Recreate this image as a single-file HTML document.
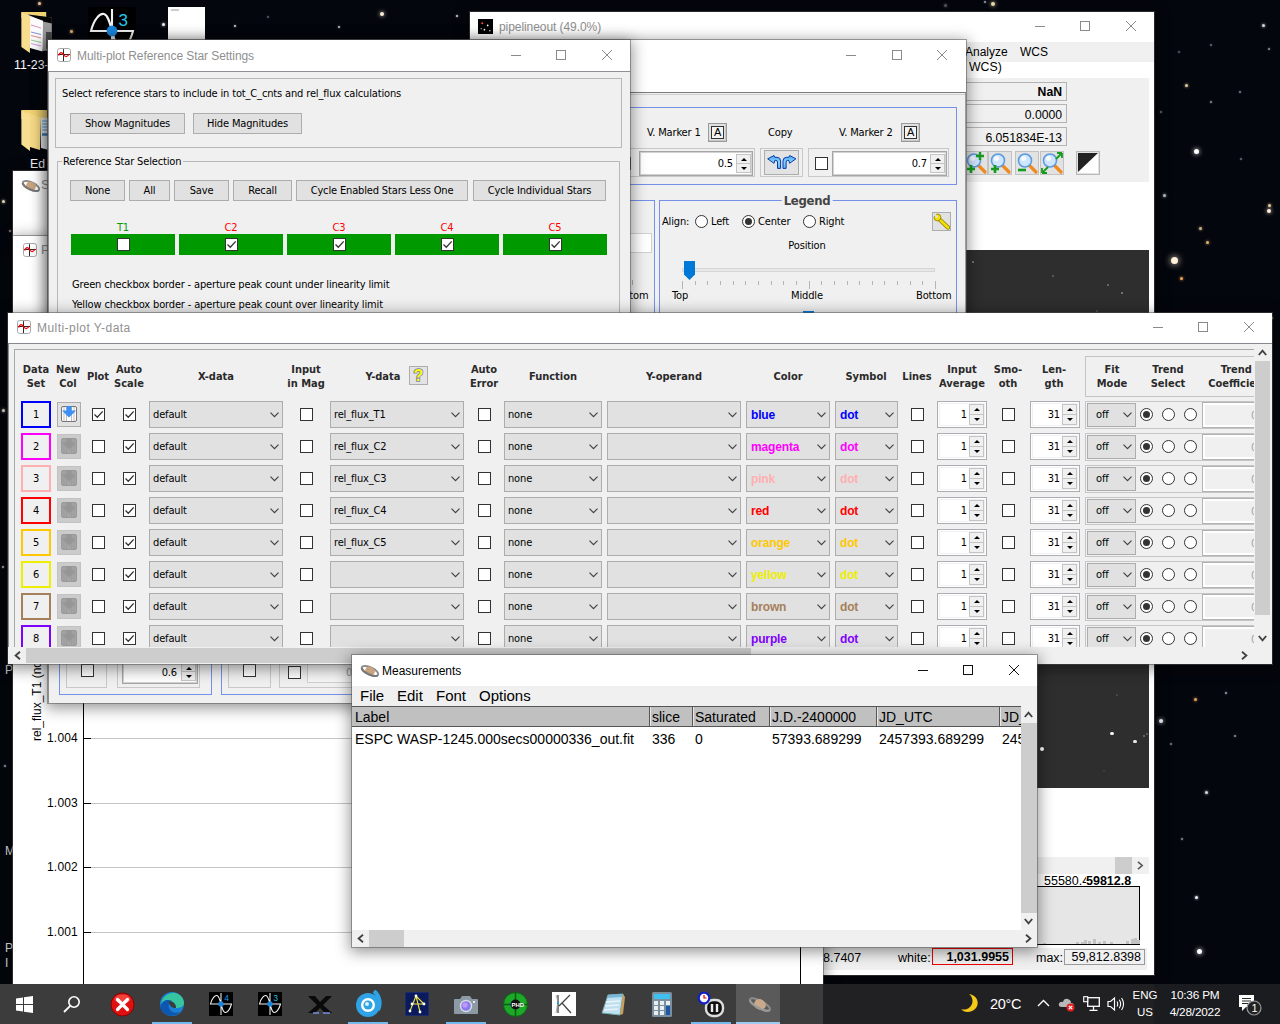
<!DOCTYPE html>
<html><head><meta charset="utf-8"><title>desktop</title>
<style>
*{box-sizing:border-box;margin:0;padding:0}
html,body{width:1280px;height:1024px;overflow:hidden}
body{background:#04060d;position:relative;font-family:"DejaVu Sans Condensed","Liberation Sans",sans-serif;font-size:11px;color:#000;letter-spacing:-.15px}
.a{position:absolute}
.seg{font-family:"Liberation Sans",sans-serif;letter-spacing:0}
.win{position:absolute;background:#f0f0f0;box-shadow:0 0 0 1px rgba(80,80,80,.5),0 3px 14px 2px rgba(0,0,0,.42)}
.lb{position:absolute;left:0;bottom:0;width:1px;background:#8e8e8e}
.tbar{position:absolute;left:0;top:0;right:0;background:#fff}
.ttl{position:absolute;font-family:"Liberation Sans",sans-serif;font-size:12px;color:#8f8f8f;white-space:nowrap;line-height:14px;letter-spacing:-.07px}
.btn{position:absolute;background:#e1e1e1;border:1px solid #adadad;text-align:center;white-space:nowrap;font-size:11px}
.combo{position:absolute;background:#e1e1e1;border:1px solid #adadad;height:27px;line-height:26px;padding-left:3px;white-space:nowrap;font-size:11px}
.combo svg{position:absolute;right:3px;top:10px}
.cb{position:absolute;width:13px;height:13px;background:#fff;border:1px solid #333}
.cb svg{position:absolute;left:0;top:0}
.spin{position:absolute;background:#fff;border:1px solid #abadb3;height:27px;font-size:11px;line-height:26px;text-align:right;box-shadow:inset 0 0 0 1px #fff, inset 0 0 0 2px #f1f1f1}
.spin i{position:absolute;right:2px;width:15px;background:#f0f0f0;border:1px solid #c4c4c4;display:block}
.spin i.u{top:2px;height:11px}
.spin i.d{bottom:2px;height:11px}
.spin i:after{content:"";position:absolute;left:4px;border-left:3px solid transparent;border-right:3px solid transparent}
.spin i.u:after{top:3px;border-bottom:3px solid #000}
.spin i.d:after{top:3px;border-top:3px solid #000}
.spin.m{border-color:#a6a6a6;box-shadow:inset 0 0 0 1px #d2d2d2}
.spin.m i{right:1px;width:15px}
.spin.m i.u,.spin.m i.d{height:10px}
.rad{position:absolute;width:13px;height:13px;border-radius:50%;background:#fff;border:1px solid #333}
.rad.on:after{content:"";position:absolute;left:2px;top:2px;width:7px;height:7px;border-radius:50%;background:#333}
.hd{position:absolute;letter-spacing:0;font-weight:bold;font-size:11px;line-height:14px;text-align:center;color:#2a2a2a;white-space:nowrap;transform:translateX(-50%)}
.blue{border:1px solid #7590ea}
.grp{position:absolute;border:1px solid #c8c8c8}
.star{position:absolute;border-radius:50%}
</style></head>
<body>
<div class="star" style="left:1261.5px;top:23.5px;width:3px;height:3px;background:#cfd3dc;box-shadow:0 0 3px #cfd3dc"></div><div class="star" style="left:1210.0px;top:44.0px;width:2px;height:2px;background:#667;box-shadow:0 0 2px #667"></div><div class="star" style="left:1178.0px;top:51.0px;width:2px;height:2px;background:#556;box-shadow:0 0 2px #556"></div><div class="star" style="left:1184.5px;top:83.5px;width:3px;height:3px;background:#d9c79a;box-shadow:0 0 3px #d9c79a"></div><div class="star" style="left:1268.0px;top:48.0px;width:2px;height:2px;background:#889;box-shadow:0 0 2px #889"></div><div class="star" style="left:1239.0px;top:91.0px;width:2px;height:2px;background:#778;box-shadow:0 0 2px #778"></div><div class="star" style="left:1210.0px;top:101.0px;width:2px;height:2px;background:#889;box-shadow:0 0 2px #889"></div><div class="star" style="left:1160.0px;top:111.0px;width:2px;height:2px;background:#667;box-shadow:0 0 2px #667"></div><div class="star" style="left:1194.0px;top:148.5px;width:5px;height:5px;background:#ffffff;box-shadow:0 0 5px #ffffff"></div><div class="star" style="left:1240.0px;top:158.0px;width:2px;height:2px;background:#667;box-shadow:0 0 2px #667"></div><div class="star" style="left:1162.5px;top:193.5px;width:3px;height:3px;background:#b8bcc8;box-shadow:0 0 3px #b8bcc8"></div><div class="star" style="left:1267.5px;top:203.5px;width:3px;height:3px;background:#e8c89a;box-shadow:0 0 3px #e8c89a"></div><div class="star" style="left:1267.0px;top:209.0px;width:4px;height:4px;background:#fff0dd;box-shadow:0 0 4px #fff0dd"></div><div class="star" style="left:1198.5px;top:227.0px;width:3px;height:3px;background:#c9b08a;box-shadow:0 0 3px #c9b08a"></div><div class="star" style="left:1205.5px;top:240.5px;width:3px;height:3px;background:#d8b070;box-shadow:0 0 3px #d8b070"></div><div class="star" style="left:1171.0px;top:257.0px;width:7px;height:7px;background:#fff2d8;box-shadow:0 0 7px #fff2d8"></div><div class="star" style="left:1179.5px;top:277.0px;width:3px;height:3px;background:#f0a050;box-shadow:0 0 3px #f0a050"></div><div class="star" style="left:1271.0px;top:317.0px;width:2px;height:2px;background:#c9a860;box-shadow:0 0 2px #c9a860"></div><div class="star" style="left:1159.0px;top:719.0px;width:4px;height:4px;background:#f4f6ff;box-shadow:0 0 4px #f4f6ff"></div><div class="star" style="left:1193.5px;top:697.5px;width:3px;height:3px;background:#e0a060;box-shadow:0 0 3px #e0a060"></div><div class="star" style="left:1225.0px;top:692.0px;width:2px;height:2px;background:#99a;box-shadow:0 0 2px #99a"></div><div class="star" style="left:1234.0px;top:735.0px;width:2px;height:2px;background:#889;box-shadow:0 0 2px #889"></div><div class="star" style="left:1204.5px;top:790.5px;width:3px;height:3px;background:#cdd;box-shadow:0 0 3px #cdd"></div><div class="star" style="left:1181.0px;top:838.0px;width:2px;height:2px;background:#889;box-shadow:0 0 2px #889"></div><div class="star" style="left:1194.5px;top:895.5px;width:3px;height:3px;background:#eef;box-shadow:0 0 3px #eef"></div><div class="star" style="left:1196.5px;top:948.5px;width:5px;height:5px;background:#ffffff;box-shadow:0 0 5px #ffffff"></div><div class="star" style="left:1170.0px;top:743.0px;width:2px;height:2px;background:#778;box-shadow:0 0 2px #778"></div><div class="star" style="left:37.5px;top:1.5px;width:3px;height:3px;background:#e8c090;box-shadow:0 0 3px #e8c090"></div><div class="star" style="left:69.5px;top:29.5px;width:3px;height:3px;background:#e0b070;box-shadow:0 0 3px #e0b070"></div><div class="star" style="left:161.5px;top:22.5px;width:3px;height:3px;background:#eee;box-shadow:0 0 3px #eee"></div><div class="star" style="left:234.0px;top:24.5px;width:2px;height:2px;background:#ccc;box-shadow:0 0 2px #ccc"></div><div class="star" style="left:267.0px;top:16.0px;width:2px;height:2px;background:#556;box-shadow:0 0 2px #556"></div><div class="star" style="left:338.0px;top:26.0px;width:2px;height:2px;background:#bbb;box-shadow:0 0 2px #bbb"></div><div class="star" style="left:380.0px;top:12.0px;width:4px;height:4px;background:#f6ecd6;box-shadow:0 0 4px #f6ecd6"></div><div class="star" style="left:456.0px;top:15.0px;width:2px;height:2px;background:#ccc;box-shadow:0 0 2px #ccc"></div><div class="star" style="left:943.5px;top:3.5px;width:3px;height:3px;background:#556;box-shadow:0 0 3px #556"></div><div class="star" style="left:984.0px;top:1.0px;width:2px;height:2px;background:#99a;box-shadow:0 0 2px #99a"></div><div class="star" style="left:991.0px;top:2.0px;width:4px;height:4px;background:#efe3b0;box-shadow:0 0 4px #efe3b0"></div><div class="star" style="left:1.5px;top:199.5px;width:3px;height:3px;background:#e8e0c0;box-shadow:0 0 3px #e8e0c0"></div><div class="star" style="left:1.5px;top:408.5px;width:3px;height:3px;background:#eed;box-shadow:0 0 3px #eed"></div><div class="star" style="left:8.5px;top:229.5px;width:2px;height:2px;background:#a88;box-shadow:0 0 2px #a88"></div><div class="star" style="left:11.0px;top:463.0px;width:2px;height:2px;background:#a77;box-shadow:0 0 2px #a77"></div><div class="star" style="left:2.0px;top:566.0px;width:2px;height:2px;background:#bbb;box-shadow:0 0 2px #bbb"></div><div class="star" style="left:4.0px;top:765.0px;width:2px;height:2px;background:#99a;box-shadow:0 0 2px #99a"></div>
<svg class="a" style="left:18px;top:8px" width="36" height="50" viewBox="0 0 36 50"><path d="M3.4 4H28.2V10H3.4Z" fill="#f3d273"/><path d="M10 6.4L33.8 9.4V42L25 43Z" fill="#9a9a9a"/><path d="M10 6.4L33.8 9.4V15.5L25 13.5Z" fill="#050505"/><path d="M28 24H33.8V40L28 41Z" fill="#4a4a4a"/><path d="M9 7L25 12.7L24.5 43.5L12 40Z" fill="#fbfbfb"/><path d="M13 17L23 20" stroke="#c7a" stroke-width=".8"/><path d="M13 24L23 26.5" stroke="#67c" stroke-width=".8"/><path d="M13 27.5L23 30" stroke="#d66" stroke-width=".8"/><path d="M13 32L23 34.5" stroke="#7b7" stroke-width=".8"/><path d="M13 35.5L23 38" stroke="#c7d" stroke-width=".8"/><path d="M3.4 4.2L12.3 8.6L11.9 45L3.4 39Z" fill="#f9dd8e"/></svg><div class="a seg" style="left:14px;top:57px;color:#fff;font-size:12.3px;line-height:16px;white-space:nowrap">11-23-</div><svg class="a" style="left:88px;top:7px" width="48" height="48" viewBox="0 0 24 24"><rect width="24" height="24" fill="#000"/><path d="M12 1V23M12 12H1.5C3 6 6 3 8 3.5C10 4 11 8 12 12ZM12 12H22.5C21 18 18 21 16 20.5C14 20 13 16 12 12Z" fill="none" stroke="#f2f2f2" stroke-width="1.05"/><circle cx="12" cy="12" r="2.7" fill="#1a86dc"/><text x="15.3" y="9.3" font-family="Liberation Sans,sans-serif" font-size="8.5" fill="#20c8f0">3</text></svg><div class="a" style="left:168px;top:7px;width:37px;height:36px;background:#fff"></div><div class="a" style="left:171px;top:9px;width:8px;height:2px;background:#ccc"></div><svg class="a" style="left:18px;top:108px" width="34" height="46" viewBox="0 0 34 46"><path d="M3.4 2H29V11H3.4Z" fill="#f1d272"/><path d="M23 9.8H30V41.7L23 40Z" fill="#e4e8ec"/><path d="M24 13H30M24 16H30M24 19H30M24 22H30" stroke="#5aa0dc" stroke-width="1.2"/><path d="M24 26.5H30" stroke="#3a78b8" stroke-width="2.4"/><path d="M8 3.5L23 10L22 42L12 39Z" fill="#f6da86"/><path d="M3.4 2.5L12 8L12 43L3.4 36.5Z" fill="#f8de92"/></svg><div class="a seg" style="left:30px;top:156px;color:#fff;font-size:12.3px;line-height:16px;white-space:nowrap">Ed</div><div class="a seg" style="left:5px;top:663px;color:#ddd;font-size:12px;width:8px;overflow:hidden">P</div><div class="a seg" style="left:5px;top:844px;color:#ddd;font-size:12px;width:8px;overflow:hidden">M</div><div class="a seg" style="left:5px;top:941px;color:#ddd;font-size:12px;width:8px;overflow:hidden">P</div><div class="a seg" style="left:5px;top:956px;color:#ddd;font-size:12px;width:8px;overflow:hidden">I</div>
<div class="win" style="left:470px;top:12px;width:684px;height:963px;background:#fff"><div class="tbar" style="height:30px"></div><svg class="a" style="left:8px;top:7px" width="15" height="15" viewBox="0 0 14 14"><rect width="14" height="14" fill="#000"/><circle cx="4" cy="4" r="1" fill="#f44"/><circle cx="9" cy="6" r=".8" fill="#fff"/><circle cx="6" cy="10" r=".8" fill="#fff"/><circle cx="11" cy="11" r=".7" fill="#ddd"/><circle cx="3" cy="9" r=".6" fill="#ccc"/></svg><div class="ttl" style="left:29px;top:8px">pipelineout (49.0%)</div><svg class="a" style="left:565px;top:9px" width="11" height="11"><path d="M0 5.5H10" stroke="#8a8a8a" stroke-width="1"/></svg><svg class="a" style="left:610px;top:9px" width="11" height="11"><rect x="0.5" y="0.5" width="9" height="9" fill="none" stroke="#8a8a8a" stroke-width="1"/></svg><svg class="a" style="left:656px;top:9px" width="11" height="11"><path d="M0 0L10 10M10 0L0 10" stroke="#8a8a8a" stroke-width="1"/></svg><div class="a seg" style="left:0;top:30px;width:684px;height:20px;background:#f0f0f0;font-size:12px;line-height:21px"><span class="a" style="left:495px">Analyze</span><span class="a" style="left:550px">WCS</span></div><div class="a seg" style="left:499px;top:48px;font-size:12.3px;line-height:15px">WCS)</div><div class="a" style="left:0;top:66px;width:679px;height:104px;background:#f0f0f0"></div><div class="a seg" style="left:420px;top:70px;width:177px;height:19px;border:1px solid #b4b4b4;background:#f0f0f0;text-align:right;padding-right:4px;font-size:12.2px;line-height:19px;font-weight:bold">NaN</div><div class="a seg" style="left:420px;top:92px;width:177px;height:19px;border:1px solid #b4b4b4;background:#f0f0f0;text-align:right;padding-right:4px;font-size:12.2px;line-height:21px;">0.0000</div><div class="a seg" style="left:420px;top:115px;width:177px;height:19px;border:1px solid #b4b4b4;background:#f0f0f0;text-align:right;padding-right:4px;font-size:12.2px;line-height:21px;">6.051834E-13</div><div class="a" style="left:494px;top:139px;width:24px;height:24px;background:#e2e2e2;border:1px solid #c2c2c2"></div><svg class="a" style="left:494px;top:139px" width="24" height="24" viewBox="0 0 24 24"><path d="M14 14L21 21" stroke="#f08a1e" stroke-width="3.2" stroke-linecap="round"/><circle cx="10" cy="9.5" r="6.5" fill="#cfe6ff" stroke="#5b9be0" stroke-width="1.6"/><circle cx="8.5" cy="7.5" r="2.5" fill="#fff" opacity=".8"/><path d="M3 18H11M7 14V22" stroke="#169c1c" stroke-width="2.6"/><path d="M12 5H20M16 1V9" stroke="#169c1c" stroke-width="2.4"/></svg><div class="a" style="left:518px;top:139px;width:24px;height:24px;background:#e2e2e2;border:1px solid #c2c2c2"></div><svg class="a" style="left:518px;top:139px" width="24" height="24" viewBox="0 0 24 24"><path d="M14 14L21 21" stroke="#f08a1e" stroke-width="3.2" stroke-linecap="round"/><circle cx="10" cy="9.5" r="6.5" fill="#cfe6ff" stroke="#5b9be0" stroke-width="1.6"/><circle cx="8.5" cy="7.5" r="2.5" fill="#fff" opacity=".8"/><path d="M3 18H11M7 14V22" stroke="#169c1c" stroke-width="2.6"/></svg><div class="a" style="left:545px;top:139px;width:24px;height:24px;background:#e2e2e2;border:1px solid #c2c2c2"></div><svg class="a" style="left:545px;top:139px" width="24" height="24" viewBox="0 0 24 24"><path d="M14 14L21 21" stroke="#f08a1e" stroke-width="3.2" stroke-linecap="round"/><circle cx="10" cy="9.5" r="6.5" fill="#cfe6ff" stroke="#5b9be0" stroke-width="1.6"/><circle cx="8.5" cy="7.5" r="2.5" fill="#fff" opacity=".8"/><path d="M3 19H11" stroke="#169c1c" stroke-width="2.6"/></svg><div class="a" style="left:570px;top:139px;width:24px;height:24px;background:#e2e2e2;border:1px solid #c2c2c2"></div><svg class="a" style="left:570px;top:139px" width="24" height="24" viewBox="0 0 24 24"><path d="M14 14L21 21" stroke="#f08a1e" stroke-width="3.2" stroke-linecap="round"/><circle cx="10" cy="9.5" r="6.5" fill="#cfe6ff" stroke="#5b9be0" stroke-width="1.6"/><circle cx="8.5" cy="7.5" r="2.5" fill="#fff" opacity=".8"/><path d="M2 22L8 16M2 22V17M2 22H7M22 2L16 8M22 2V7M22 2H17" stroke="#169c1c" stroke-width="1.8" fill="none"/></svg><div class="a" style="left:606px;top:139px;width:24px;height:24px;background:#e2e2e2;border:1px solid #b8b8b8"></div><svg class="a" style="left:608px;top:141px" width="20" height="20"><rect width="20" height="20" fill="#fff"/><path d="M0 0H20L0 19Z" fill="#222"/></svg><div class="a" style="left:0;top:238px;width:679px;height:538px;background:#2e2e2e"></div><div class="star" style="left:502.0px;top:249.0px;width:2px;height:2px;background:#888"></div><div class="star" style="left:582.0px;top:263.0px;width:2px;height:2px;background:#666"></div><div class="star" style="left:637.0px;top:272.0px;width:2px;height:2px;background:#777"></div><div class="star" style="left:651.0px;top:280.0px;width:2px;height:2px;background:#888"></div><div class="star" style="left:626.0px;top:298.0px;width:2px;height:2px;background:#555"></div><div class="star" style="left:640.3px;top:719.5999999999999px;width:3.4px;height:3.4px;background:#f4f4f4"></div><div class="star" style="left:663.4px;top:727.8px;width:3.2px;height:3.2px;background:#e8e8e8"></div><div class="star" style="left:569.9px;top:734.9px;width:4.2px;height:4.2px;background:#fff"></div><div class="star" style="left:673.0px;top:723.0px;width:2px;height:2px;background:#777"></div><div class="star" style="left:676.0px;top:721.0px;width:2px;height:2px;background:#666"></div><div class="star" style="left:646.0px;top:681.6px;width:2px;height:2px;background:#505050"></div><div class="star" style="left:633.0px;top:758.0px;width:2px;height:2px;background:#444"></div><div class="a" style="left:0;top:845px;width:679px;height:17px;background:#f0f0f0"></div><div class="a" style="left:645px;top:845px;width:17px;height:17px;background:#cdcdcd"></div><svg class="a" style="left:667px;top:849px" width="7" height="9"><path d="M1 0.8L5.2 4.5L1 8.2" fill="none" stroke="#555" stroke-width="1.6"/></svg><div class="a seg" style="left:574px;top:862px;font-size:12.5px;line-height:14px;white-space:nowrap">55580.4</div><div class="a seg" style="left:616px;top:862px;font-size:12.5px;line-height:14px;font-weight:bold;white-space:nowrap;background:#fff">59812.8</div><div class="a" style="left:560px;top:874px;width:110px;height:59px;background:#e6e6e6;border:1px solid #000;border-left:none"></div><div class="a" style="left:573px;top:931px;width:3px;height:1px;background:#c2c2c2"></div><div class="a" style="left:606px;top:930px;width:3px;height:2px;background:#c2c2c2"></div><div class="a" style="left:611px;top:930px;width:3px;height:2px;background:#c2c2c2"></div><div class="a" style="left:614px;top:928px;width:3px;height:4px;background:#c2c2c2"></div><div class="a" style="left:618px;top:929px;width:3px;height:3px;background:#c2c2c2"></div><div class="a" style="left:623px;top:927px;width:3px;height:5px;background:#c2c2c2"></div><div class="a" style="left:628px;top:930px;width:3px;height:2px;background:#c2c2c2"></div><div class="a" style="left:633px;top:929px;width:3px;height:3px;background:#c2c2c2"></div><div class="a" style="left:640px;top:930px;width:3px;height:2px;background:#c2c2c2"></div><div class="a" style="left:656px;top:929px;width:3px;height:3px;background:#c2c2c2"></div><div class="a" style="left:661px;top:927px;width:3px;height:5px;background:#c2c2c2"></div><div class="a" style="left:664px;top:926px;width:3px;height:6px;background:#c2c2c2"></div><div class="a" style="left:667px;top:928px;width:3px;height:4px;background:#c2c2c2"></div><div class="a" style="left:0;top:936px;width:677px;height:22px;background:#f0f0f0"></div><div class="a seg" style="left:353px;top:938px;font-size:12.5px;line-height:16px;white-space:nowrap">8.7407</div><div class="a seg" style="left:428px;top:938px;font-size:12.5px;line-height:16px;white-space:nowrap">white:</div><div class="a seg" style="left:462px;top:936px;width:81px;height:17px;border:1px solid #e00;background:#f0f0f0;text-align:right;padding-right:3px;font-size:12.5px;line-height:16px;font-weight:bold">1,031.9955</div><div class="a seg" style="left:566px;top:938px;font-size:12.5px;line-height:16px;white-space:nowrap">max:</div><div class="a seg" style="left:594px;top:937px;width:81px;height:16px;border:1px solid #999;background:#f0f0f0;text-align:right;padding-right:3px;font-size:12.5px;line-height:14px">59,812.8398</div></div>
<div class="win" style="left:13px;top:171px;width:500px;height:65px;background:#fff"><div class="a" style="left:8px;top:7px"><svg width="20" height="16" viewBox="0 0 20 16"><g transform="rotate(25 10 8)"><ellipse cx="10" cy="8" rx="9" ry="3.6" fill="none" stroke="#8c8c8c" stroke-width="2"/><ellipse cx="10" cy="8" rx="5" ry="4.2" fill="#c9a37c"/><path d="M1.2 8.6A9 3.6 0 0 0 18.8 8.6" fill="none" stroke="#777" stroke-width="2"/></g></svg></div><div class="ttl" style="left:28px;top:7px;font-size:13px">S</div></div>
<div class="win" style="left:13px;top:236px;width:810px;height:760px;background:#fff"><div class="a" style="left:10px;top:7px"><svg width="14" height="14" viewBox="0 0 14 14"><rect x=".5" y=".5" width="13" height="13" rx="2.2" fill="#fff" stroke="#a8a8a8"/><path d="M6.5 1.2V13M1 6.5H13" stroke="#2a2a2a" stroke-width="1"/><path d="M1.6 7.6C3 4.2 4.6 3.6 6.5 6.5S10 9.6 12.2 6" fill="none" stroke="#f00" stroke-width="1.3"/></svg></div><div class="ttl" style="left:28px;top:7px;font-size:13px">P</div><div class="a" style="left:70px;top:440px;width:1px;height:330px;background:#000"></div><div class="a" style="left:787px;top:700px;width:1px;height:70px;background:#000"></div><div class="a" style="left:78px;top:502px;width:709px;height:1px;background:#c4c4c4"></div><div class="a" style="left:70px;top:502px;width:8px;height:1px;background:#000"></div><div class="a seg" style="left:20px;top:494px;width:45px;text-align:right;font-size:12px;line-height:16px;letter-spacing:.2px">1.004</div><div class="a" style="left:78px;top:567px;width:709px;height:1px;background:#c4c4c4"></div><div class="a" style="left:70px;top:567px;width:8px;height:1px;background:#000"></div><div class="a seg" style="left:20px;top:559px;width:45px;text-align:right;font-size:12px;line-height:16px;letter-spacing:.2px">1.003</div><div class="a" style="left:78px;top:631px;width:709px;height:1px;background:#c4c4c4"></div><div class="a" style="left:70px;top:631px;width:8px;height:1px;background:#000"></div><div class="a seg" style="left:20px;top:623px;width:45px;text-align:right;font-size:12px;line-height:16px;letter-spacing:.2px">1.002</div><div class="a" style="left:78px;top:696px;width:709px;height:1px;background:#c4c4c4"></div><div class="a" style="left:70px;top:696px;width:8px;height:1px;background:#000"></div><div class="a seg" style="left:20px;top:688px;width:45px;text-align:right;font-size:12px;line-height:16px;letter-spacing:.2px">1.001</div><div class="a seg" style="left:17px;top:505px;width:0;height:0"><div style="position:absolute;left:0;top:0;transform-origin:0 0;transform:rotate(-90deg);white-space:nowrap;font-size:12px;line-height:14px;width:200px">rel_flux_T1 (normalized)</div></div></div>
<div class="win" style="left:48px;top:40px;width:918px;height:663px"><div class="tbar" style="height:53px;border-bottom:1px solid #7a7a7a"></div><div class="a" style="left:0;top:54px;width:918px;height:1px;background:#d0d0d0"></div><svg class="a" style="left:798px;top:10px" width="11" height="11"><path d="M0 5.5H10" stroke="#8a8a8a" stroke-width="1"/></svg><svg class="a" style="left:844px;top:10px" width="11" height="11"><rect x="0.5" y="0.5" width="9" height="9" fill="none" stroke="#8a8a8a" stroke-width="1"/></svg><svg class="a" style="left:889px;top:10px" width="11" height="11"><path d="M0 0L10 10M10 0L0 10" stroke="#8a8a8a" stroke-width="1"/></svg><div class="a" style="right:0;top:53px;width:1px;bottom:0;background:#9c9c9c"></div><div class="lb" style="top:53px"></div><div class="a blue" style="left:500px;top:67px;width:409px;height:78px"></div><div class="a" style="left:599px;top:86px;white-space:nowrap;line-height:14px">V. Marker 1</div><div class="a" style="left:720px;top:86px;white-space:nowrap;line-height:14px">Copy</div><div class="a" style="left:791px;top:86px;white-space:nowrap;line-height:14px">V. Marker 2</div><div class="a" style="left:660px;top:83px;width:19px;height:19px;background:#e1e1e1;border:1px solid #9a9a9a;box-shadow:inset -1px -1px 0 #c8c8c8"><div style="position:absolute;left:2px;top:2px;width:13px;height:13px;border:1px solid #333;font:normal 11px/11px 'Liberation Sans',sans-serif;text-align:center;background:#f4f4f4">A</div></div><div class="a" style="left:853px;top:83px;width:19px;height:19px;background:#e1e1e1;border:1px solid #9a9a9a;box-shadow:inset -1px -1px 0 #c8c8c8"><div style="position:absolute;left:2px;top:2px;width:13px;height:13px;border:1px solid #333;font:normal 11px/11px 'Liberation Sans',sans-serif;text-align:center;background:#f4f4f4">A</div></div><div class="grp" style="left:560px;top:108px;width:147px;height:29px"></div><div class="cb" style="left:570px;top:117px"></div><div class="spin m" style="left:591px;top:111px;width:114px;height:25px;padding-right:19px;line-height:23px">0.5<i class="u"></i><i class="d"></i></div><div class="grp" style="left:712px;top:108px;width:43px;height:29px"></div><div class="a" style="left:716px;top:110px;width:35px;height:25px;background:#e3e3e3;border:1px solid #adadad"></div><svg class="a" style="left:719px;top:115px" width="30" height="15" viewBox="0 0 30 15"><defs><linearGradient id="cg" x1="0" y1="0" x2="0" y2="1"><stop offset="0" stop-color="#4aa4f4"/><stop offset=".5" stop-color="#86d2ff"/><stop offset="1" stop-color="#5ab4f8"/></linearGradient></defs><g fill="url(#cg)" stroke="#0b3ca6" stroke-width="1" stroke-linejoin="round"><path d="M0.7 3.8L7 0.5L7.8 2.3H10Q13.6 2.3 13.6 6V13.4H10.5V7Q10.5 5.4 8.9 5.4H7.8L7 8.3Z"/><path transform="translate(29.6 0) scale(-1 1)" d="M0.7 3.8L7 0.5L7.8 2.3H10Q13.6 2.3 13.6 6V13.4H10.5V7Q10.5 5.4 8.9 5.4H7.8L7 8.3Z"/></g></svg><div class="grp" style="left:760px;top:108px;width:141px;height:29px"></div><div class="cb" style="left:767px;top:117px"></div><div class="spin m" style="left:784px;top:111px;width:115px;height:25px;padding-right:19px;line-height:23px">0.7<i class="u"></i><i class="d"></i></div><div class="a blue" style="left:500px;top:160px;width:107px;height:200px"></div><div class="a" style="left:570px;top:193px;width:34px;height:20px;background:#fff;border:1px solid #d0d0d0"></div><div class="a" style="left:565px;top:249px;white-space:nowrap;line-height:14px">Bottom</div><div class="a" style="left:584px;top:240px;width:1px;height:5px;background:#b0b0b0"></div><div class="a blue" style="left:611px;top:160px;width:298px;height:200px"></div><div class="a" style="left:759px;top:153px;transform:translateX(-50%);background:#f0f0f0;padding:0 2px;font-weight:bold;font-size:13px;line-height:16px;color:#444;letter-spacing:-.3px">Legend</div><div class="a" style="left:614px;top:175px;white-space:nowrap;line-height:14px">Align:</div><div class="rad" style="left:646.5px;top:174.5px"></div><div class="a" style="left:663px;top:175px;line-height:14px">Left</div><div class="rad on" style="left:693.5px;top:174.5px"></div><div class="a" style="left:710px;top:175px;line-height:14px">Center</div><div class="rad" style="left:754.5px;top:174.5px"></div><div class="a" style="left:771px;top:175px;line-height:14px">Right</div><div class="a" style="left:884px;top:172px;width:19px;height:19px;background:#e1e1e1;border:1px solid #adadad"></div><svg class="a" style="left:885px;top:173px" width="17" height="17" viewBox="0 0 17 17"><path d="M6 6L15 14.5" stroke="#8a7a00" stroke-width="4.2" stroke-linecap="round"/><path d="M6 6L15 14.5" stroke="#f4e000" stroke-width="2.8" stroke-linecap="round"/><circle cx="4.5" cy="4.5" r="3.4" fill="#f4e000" stroke="#8a7a00" stroke-width=".8"/><path d="M1 1L4.5 4.5" stroke="#e1e1e1" stroke-width="2.2"/></svg><div class="a" style="left:759px;top:199px;transform:translateX(-50%);line-height:14px">Position</div><div class="a" style="left:634px;top:228px;width:253px;height:4px;background:#e7e7e7;border:1px solid #d6d6d6"></div><svg class="a" style="left:636px;top:221px" width="11" height="19"><path d="M0 0H11V13.5L5.5 19L0 13.5Z" fill="#0078d7"/></svg><div class="a" style="left:634.0px;top:241px;width:1px;height:8px;background:#b4b4b4"></div><div class="a" style="left:646.6px;top:241px;width:1px;height:4px;background:#b4b4b4"></div><div class="a" style="left:659.3px;top:241px;width:1px;height:4px;background:#b4b4b4"></div><div class="a" style="left:672.0px;top:241px;width:1px;height:4px;background:#b4b4b4"></div><div class="a" style="left:684.6px;top:241px;width:1px;height:4px;background:#b4b4b4"></div><div class="a" style="left:697.2px;top:241px;width:1px;height:4px;background:#b4b4b4"></div><div class="a" style="left:709.9px;top:241px;width:1px;height:4px;background:#b4b4b4"></div><div class="a" style="left:722.5px;top:241px;width:1px;height:4px;background:#b4b4b4"></div><div class="a" style="left:735.2px;top:241px;width:1px;height:4px;background:#b4b4b4"></div><div class="a" style="left:747.9px;top:241px;width:1px;height:4px;background:#b4b4b4"></div><div class="a" style="left:760.5px;top:241px;width:1px;height:8px;background:#b4b4b4"></div><div class="a" style="left:773.1px;top:241px;width:1px;height:4px;background:#b4b4b4"></div><div class="a" style="left:785.8px;top:241px;width:1px;height:4px;background:#b4b4b4"></div><div class="a" style="left:798.5px;top:241px;width:1px;height:4px;background:#b4b4b4"></div><div class="a" style="left:811.1px;top:241px;width:1px;height:4px;background:#b4b4b4"></div><div class="a" style="left:823.8px;top:241px;width:1px;height:4px;background:#b4b4b4"></div><div class="a" style="left:836.4px;top:241px;width:1px;height:4px;background:#b4b4b4"></div><div class="a" style="left:849.0px;top:241px;width:1px;height:4px;background:#b4b4b4"></div><div class="a" style="left:861.7px;top:241px;width:1px;height:4px;background:#b4b4b4"></div><div class="a" style="left:874.4px;top:241px;width:1px;height:4px;background:#b4b4b4"></div><div class="a" style="left:887.0px;top:241px;width:1px;height:8px;background:#b4b4b4"></div><div class="a" style="left:624px;top:249px;line-height:14px">Top</div><div class="a" style="left:759px;top:249px;transform:translateX(-50%);line-height:14px">Middle</div><div class="a" style="left:868px;top:249px;line-height:14px">Bottom</div><div class="a" style="left:755px;top:271px;width:11px;height:2px;background:#0078d7"></div><div class="a blue" style="left:11px;top:560px;width:153px;height:95px"></div><div class="grp" style="left:18px;top:600px;width:41px;height:48px"></div><div class="cb" style="left:33px;top:624px"></div><div class="grp" style="left:69px;top:600px;width:83px;height:48px"></div><div class="spin m" style="left:74px;top:620px;width:76px;height:24px;padding-right:20px;line-height:23px">0.6<i class="u"></i><i class="d"></i></div><div class="a blue" style="left:173px;top:560px;width:250px;height:95px"></div><div class="grp" style="left:180px;top:600px;width:43px;height:48px"></div><div class="cb" style="left:195px;top:624px"></div><div class="grp" style="left:231px;top:600px;width:120px;height:48px"></div><div class="cb" style="left:240px;top:626px"></div><div class="a" style="left:259px;top:621px;width:88px;height:22px;background:#f6f6f6;border:1px solid #d0d0d0;color:#999;padding-left:38px;line-height:22px">0.6</div></div>
<div class="win" style="left:48px;top:40px;width:582px;height:290px"><div class="tbar" style="height:32px;border-bottom:1px solid #8e9096"></div><div class="a" style="left:9px;top:8px"><svg width="14" height="14" viewBox="0 0 14 14"><rect x=".5" y=".5" width="13" height="13" rx="2.2" fill="#fff" stroke="#a8a8a8"/><path d="M6.5 1.2V13M1 6.5H13" stroke="#2a2a2a" stroke-width="1"/><path d="M1.6 7.6C3 4.2 4.6 3.6 6.5 6.5S10 9.6 12.2 6" fill="none" stroke="#f00" stroke-width="1.3"/></svg></div><div class="lb" style="top:31px"></div><div class="ttl" style="left:29px;top:9px">Multi-plot Reference Star Settings</div><svg class="a" style="left:463px;top:10px" width="11" height="11"><path d="M0 5.5H10" stroke="#8a8a8a" stroke-width="1"/></svg><svg class="a" style="left:508px;top:10px" width="11" height="11"><rect x="0.5" y="0.5" width="9" height="9" fill="none" stroke="#8a8a8a" stroke-width="1"/></svg><svg class="a" style="left:554px;top:10px" width="11" height="11"><path d="M0 0L10 10M10 0L0 10" stroke="#8a8a8a" stroke-width="1"/></svg><div class="grp" style="left:7px;top:38px;width:567px;height:70px;border-color:#b8b8b8"></div><div class="a" style="left:14px;top:47px;white-space:nowrap;line-height:14px;">Select reference stars to include in tot_C_cnts and rel_flux calculations</div><div class="btn" style="left:22px;top:73px;width:115px;height:21px;line-height:20px">Show Magnitudes</div><div class="btn" style="left:145px;top:73px;width:109px;height:21px;line-height:20px">Hide Magnitudes</div><div class="grp" style="left:9px;top:121px;width:563px;height:200px;border-color:#b8b8b8"></div><div class="a" style="left:14px;top:115px;background:#f0f0f0;padding:0 2px 0 1px;white-space:nowrap;line-height:14px">Reference Star Selection</div><div class="btn" style="left:22px;top:140px;width:55px;height:21px;line-height:20px">None</div><div class="btn" style="left:81px;top:140px;width:41px;height:21px;line-height:20px">All</div><div class="btn" style="left:126px;top:140px;width:55px;height:21px;line-height:20px">Save</div><div class="btn" style="left:185px;top:140px;width:59px;height:21px;line-height:20px">Recall</div><div class="btn" style="left:248px;top:140px;width:172px;height:21px;line-height:20px">Cycle Enabled Stars Less One</div><div class="btn" style="left:425px;top:140px;width:133px;height:21px;line-height:20px">Cycle Individual Stars</div><div class="a" style="left:23px;top:181px;width:104px;text-align:center;color:#0a9a0a;line-height:14px">T1</div><div class="a" style="left:23px;top:194px;width:104px;height:21px;background:#009900"></div><div class="cb" style="left:69px;top:198px"></div><div class="a" style="left:131px;top:181px;width:104px;text-align:center;color:#f00;line-height:14px">C2</div><div class="a" style="left:131px;top:194px;width:104px;height:21px;background:#009900"></div><div class="cb" style="left:177px;top:198px"><svg width="11" height="11" viewBox="0 0 11 11"><path d="M1.5 5.5 L4.3 8.3 L9.7 2.4" fill="none" stroke="#333" stroke-width="1.3"/></svg></div><div class="a" style="left:239px;top:181px;width:104px;text-align:center;color:#f00;line-height:14px">C3</div><div class="a" style="left:239px;top:194px;width:104px;height:21px;background:#009900"></div><div class="cb" style="left:285px;top:198px"><svg width="11" height="11" viewBox="0 0 11 11"><path d="M1.5 5.5 L4.3 8.3 L9.7 2.4" fill="none" stroke="#333" stroke-width="1.3"/></svg></div><div class="a" style="left:347px;top:181px;width:104px;text-align:center;color:#f00;line-height:14px">C4</div><div class="a" style="left:347px;top:194px;width:104px;height:21px;background:#009900"></div><div class="cb" style="left:393px;top:198px"><svg width="11" height="11" viewBox="0 0 11 11"><path d="M1.5 5.5 L4.3 8.3 L9.7 2.4" fill="none" stroke="#333" stroke-width="1.3"/></svg></div><div class="a" style="left:455px;top:181px;width:104px;text-align:center;color:#f00;line-height:14px">C5</div><div class="a" style="left:455px;top:194px;width:104px;height:21px;background:#009900"></div><div class="cb" style="left:501px;top:198px"><svg width="11" height="11" viewBox="0 0 11 11"><path d="M1.5 5.5 L4.3 8.3 L9.7 2.4" fill="none" stroke="#333" stroke-width="1.3"/></svg></div><div class="a" style="left:24px;top:238px;white-space:nowrap;line-height:14px;">Green checkbox border - aperture peak count under linearity limit</div><div class="a" style="left:24px;top:258px;white-space:nowrap;line-height:14px;">Yellow checkbox border - aperture peak count over linearity limit</div></div>
<div class="win" style="left:8px;top:313px;width:1264px;height:351px"><div class="tbar" style="height:31px;border-bottom:1px solid #84888e"></div><div class="a" style="left:9px;top:7px"><svg width="14" height="14" viewBox="0 0 14 14"><rect x=".5" y=".5" width="13" height="13" rx="2.2" fill="#fff" stroke="#a8a8a8"/><path d="M6.5 1.2V13M1 6.5H13" stroke="#2a2a2a" stroke-width="1"/><path d="M1.6 7.6C3 4.2 4.6 3.6 6.5 6.5S10 9.6 12.2 6" fill="none" stroke="#f00" stroke-width="1.3"/></svg></div><div class="lb" style="top:30px"></div><div class="ttl" style="left:29px;top:8px;letter-spacing:.45px">Multi-plot Y-data</div><svg class="a" style="left:1145px;top:9px" width="11" height="11"><path d="M0 5.5H10" stroke="#8a8a8a" stroke-width="1"/></svg><svg class="a" style="left:1190px;top:9px" width="11" height="11"><rect x="0.5" y="0.5" width="9" height="9" fill="none" stroke="#8a8a8a" stroke-width="1"/></svg><svg class="a" style="left:1236px;top:9px" width="11" height="11"><path d="M0 0L10 10M10 0L0 10" stroke="#8a8a8a" stroke-width="1"/></svg><div class="a" style="left:1px;top:31px;width:1245px;height:303px;overflow:hidden"><div class="grp" style="left:5px;top:5px;width:1400px;height:400px;border-color:#a8a8a8"></div><div class="grp" style="left:1076px;top:12px;width:400px;height:41px;border-color:#c4c4c4"></div><div class="hd" style="left:27px;top:19px">Data<br>Set</div><div class="hd" style="left:59px;top:19px">New<br>Col</div><div class="hd" style="left:89px;top:26px">Plot</div><div class="hd" style="left:120px;top:19px">Auto<br>Scale</div><div class="hd" style="left:207px;top:26px">X-data</div><div class="hd" style="left:297px;top:19px">Input<br>in Mag</div><div class="hd" style="left:374px;top:26px">Y-data</div><div class="hd" style="left:475px;top:19px">Auto<br>Error</div><div class="hd" style="left:544px;top:26px">Function</div><div class="hd" style="left:665px;top:26px">Y-operand</div><div class="hd" style="left:779px;top:26px">Color</div><div class="hd" style="left:857px;top:26px">Symbol</div><div class="hd" style="left:908px;top:26px">Lines</div><div class="hd" style="left:953px;top:19px">Input<br>Average</div><div class="hd" style="left:999px;top:19px">Smo-<br>oth</div><div class="hd" style="left:1045px;top:19px">Len-<br>gth</div><div class="hd" style="left:1103px;top:19px">Fit<br>Mode</div><div class="hd" style="left:1159px;top:19px">Trend<br>Select</div><div class="hd" style="left:1229px;top:19px">Trend&nbsp;<br>Coefficient</div><div class="a" style="left:400px;top:22px;width:19px;height:19px;background:#e3e3e3;border:1px solid #adadad"><svg class="a" style="left:0;top:0" width="17" height="17" viewBox="0 0 17 17"><text x="8.4" y="14" text-anchor="middle" font-family="Liberation Sans,sans-serif" font-weight="bold" font-size="16" fill="#ffff00" stroke="#7a7eae" stroke-width="1.6" paint-order="stroke">?</text></svg></div><div class="a" style="left:12px;top:57px;width:30px;height:27px;border:2px solid #0000ff;text-align:center;line-height:23px;font-size:11px">1</div><div class="a" style="left:48px;top:58px;width:24px;height:25px;background:#e1e1e1;border:1px solid #adadad"><div style="position:absolute;left:3px;top:3px"><svg width="16" height="16" viewBox="0 0 16 16"><rect x=".5" y=".5" width="15" height="15" rx="1.5" fill="#fff" stroke="#777"/><path d="M3 1V15M5.5 1V15M10.5 1V15M13 1V15" stroke="#bbb" stroke-width="1"/><path d="M5.5 0H10.5V4.5H15L8 11.5L1 4.5H5.5Z" fill="#3b8ff5"/></svg></div></div><div class="cb" style="left:83px;top:64px"><svg width="11" height="11" viewBox="0 0 11 11"><path d="M1.5 5.5 L4.3 8.3 L9.7 2.4" fill="none" stroke="#333" stroke-width="1.3"/></svg></div><div class="cb" style="left:114px;top:64px"><svg width="11" height="11" viewBox="0 0 11 11"><path d="M1.5 5.5 L4.3 8.3 L9.7 2.4" fill="none" stroke="#333" stroke-width="1.3"/></svg></div><div class="combo" style="left:140px;top:57px;width:134px;height:27px;">default<svg width="9" height="6" viewBox="0 0 9 6"><path d="M0.5 0.7 L4.5 4.7 L8.5 0.7" fill="none" stroke="#444" stroke-width="1.2"/></svg></div><div class="cb" style="left:291px;top:64px"></div><div class="combo" style="left:321px;top:57px;width:134px;height:27px;">rel_flux_T1<svg width="9" height="6" viewBox="0 0 9 6"><path d="M0.5 0.7 L4.5 4.7 L8.5 0.7" fill="none" stroke="#444" stroke-width="1.2"/></svg></div><div class="cb" style="left:469px;top:64px"></div><div class="combo" style="left:495px;top:57px;width:98px;height:27px;">none<svg width="9" height="6" viewBox="0 0 9 6"><path d="M0.5 0.7 L4.5 4.7 L8.5 0.7" fill="none" stroke="#444" stroke-width="1.2"/></svg></div><div class="combo" style="left:598px;top:57px;width:134px;height:27px;"><svg width="9" height="6" viewBox="0 0 9 6"><path d="M0.5 0.7 L4.5 4.7 L8.5 0.7" fill="none" stroke="#444" stroke-width="1.2"/></svg></div><div class="combo" style="left:737px;top:57px;width:84px;height:27px;color:#0000ff;font-weight:bold;font-family:'Liberation Sans',sans-serif;font-size:12px;padding-left:4px">blue<svg width="9" height="6" viewBox="0 0 9 6"><path d="M0.5 0.7 L4.5 4.7 L8.5 0.7" fill="none" stroke="#444" stroke-width="1.2"/></svg></div><div class="combo" style="left:826px;top:57px;width:63px;height:27px;color:#0000ff;font-weight:bold;font-family:'Liberation Sans',sans-serif;font-size:12px;padding-left:4px">dot<svg width="9" height="6" viewBox="0 0 9 6"><path d="M0.5 0.7 L4.5 4.7 L8.5 0.7" fill="none" stroke="#444" stroke-width="1.2"/></svg></div><div class="cb" style="left:902px;top:64px"></div><div class="spin" style="left:928px;top:57px;width:50px;height:27px;padding-right:19px;">1<i class="u"></i><i class="d"></i></div><div class="cb" style="left:993px;top:64px"></div><div class="spin" style="left:1021px;top:57px;width:50px;height:27px;padding-right:19px;">31<i class="u"></i><i class="d"></i></div><div class="grp" style="left:1076px;top:57px;width:300px;height:28px;border-color:#c6c6c6"></div><div class="combo" style="left:1078px;top:59px;width:49px;height:24px;padding-left:8px;line-height:22px">off<svg style="top:8px" width="9" height="6" viewBox="0 0 9 6"><path d="M0.5 0.7 L4.5 4.7 L8.5 0.7" fill="none" stroke="#444" stroke-width="1.2"/></svg></div><div class="rad on" style="left:1130.5px;top:64.0px"></div><div class="rad" style="left:1152.5px;top:64.0px"></div><div class="rad" style="left:1174.5px;top:64.0px"></div><div class="a" style="left:1193px;top:58px;width:120px;height:26px;background:#f0f0f0;border:1px solid #b2b2b6;box-shadow:inset 0 0 0 2px #fff;color:#a0a0a0;line-height:25px;padding-left:48px">0</div><div class="a" style="left:12px;top:89px;width:30px;height:27px;border:2px solid #ff00ff;text-align:center;line-height:23px;font-size:11px">2</div><div class="a" style="left:48px;top:90px;width:24px;height:25px;background:#cbcbcb;border:1px solid #c2c2c2"><div style="position:absolute;left:3px;top:3px"><svg width="16" height="16" viewBox="0 0 16 16"><rect x=".5" y=".5" width="15" height="15" rx="1.5" fill="#a4a4a4" stroke="#9a9a9a"/><path d="M3 1V15M5.5 1V15M10.5 1V15M13 1V15" stroke="#9c9c9c" stroke-width="1"/><path d="M5.5 0H10.5V4.5H15L8 11.5L1 4.5H5.5Z" fill="#969696"/></svg></div></div><div class="cb" style="left:83px;top:96px"></div><div class="cb" style="left:114px;top:96px"><svg width="11" height="11" viewBox="0 0 11 11"><path d="M1.5 5.5 L4.3 8.3 L9.7 2.4" fill="none" stroke="#333" stroke-width="1.3"/></svg></div><div class="combo" style="left:140px;top:89px;width:134px;height:27px;">default<svg width="9" height="6" viewBox="0 0 9 6"><path d="M0.5 0.7 L4.5 4.7 L8.5 0.7" fill="none" stroke="#444" stroke-width="1.2"/></svg></div><div class="cb" style="left:291px;top:96px"></div><div class="combo" style="left:321px;top:89px;width:134px;height:27px;">rel_flux_C2<svg width="9" height="6" viewBox="0 0 9 6"><path d="M0.5 0.7 L4.5 4.7 L8.5 0.7" fill="none" stroke="#444" stroke-width="1.2"/></svg></div><div class="cb" style="left:469px;top:96px"></div><div class="combo" style="left:495px;top:89px;width:98px;height:27px;">none<svg width="9" height="6" viewBox="0 0 9 6"><path d="M0.5 0.7 L4.5 4.7 L8.5 0.7" fill="none" stroke="#444" stroke-width="1.2"/></svg></div><div class="combo" style="left:598px;top:89px;width:134px;height:27px;"><svg width="9" height="6" viewBox="0 0 9 6"><path d="M0.5 0.7 L4.5 4.7 L8.5 0.7" fill="none" stroke="#444" stroke-width="1.2"/></svg></div><div class="combo" style="left:737px;top:89px;width:84px;height:27px;color:#ff00ff;font-weight:bold;font-family:'Liberation Sans',sans-serif;font-size:12px;padding-left:4px">magenta<svg width="9" height="6" viewBox="0 0 9 6"><path d="M0.5 0.7 L4.5 4.7 L8.5 0.7" fill="none" stroke="#444" stroke-width="1.2"/></svg></div><div class="combo" style="left:826px;top:89px;width:63px;height:27px;color:#ff00ff;font-weight:bold;font-family:'Liberation Sans',sans-serif;font-size:12px;padding-left:4px">dot<svg width="9" height="6" viewBox="0 0 9 6"><path d="M0.5 0.7 L4.5 4.7 L8.5 0.7" fill="none" stroke="#444" stroke-width="1.2"/></svg></div><div class="cb" style="left:902px;top:96px"></div><div class="spin" style="left:928px;top:89px;width:50px;height:27px;padding-right:19px;">1<i class="u"></i><i class="d"></i></div><div class="cb" style="left:993px;top:96px"></div><div class="spin" style="left:1021px;top:89px;width:50px;height:27px;padding-right:19px;">31<i class="u"></i><i class="d"></i></div><div class="grp" style="left:1076px;top:89px;width:300px;height:28px;border-color:#c6c6c6"></div><div class="combo" style="left:1078px;top:91px;width:49px;height:24px;padding-left:8px;line-height:22px">off<svg style="top:8px" width="9" height="6" viewBox="0 0 9 6"><path d="M0.5 0.7 L4.5 4.7 L8.5 0.7" fill="none" stroke="#444" stroke-width="1.2"/></svg></div><div class="rad on" style="left:1130.5px;top:96.0px"></div><div class="rad" style="left:1152.5px;top:96.0px"></div><div class="rad" style="left:1174.5px;top:96.0px"></div><div class="a" style="left:1193px;top:90px;width:120px;height:26px;background:#f0f0f0;border:1px solid #b2b2b6;box-shadow:inset 0 0 0 2px #fff;color:#a0a0a0;line-height:25px;padding-left:48px">0</div><div class="a" style="left:12px;top:121px;width:30px;height:27px;border:2px solid #ffafaf;text-align:center;line-height:23px;font-size:11px">3</div><div class="a" style="left:48px;top:122px;width:24px;height:25px;background:#cbcbcb;border:1px solid #c2c2c2"><div style="position:absolute;left:3px;top:3px"><svg width="16" height="16" viewBox="0 0 16 16"><rect x=".5" y=".5" width="15" height="15" rx="1.5" fill="#a4a4a4" stroke="#9a9a9a"/><path d="M3 1V15M5.5 1V15M10.5 1V15M13 1V15" stroke="#9c9c9c" stroke-width="1"/><path d="M5.5 0H10.5V4.5H15L8 11.5L1 4.5H5.5Z" fill="#969696"/></svg></div></div><div class="cb" style="left:83px;top:128px"></div><div class="cb" style="left:114px;top:128px"><svg width="11" height="11" viewBox="0 0 11 11"><path d="M1.5 5.5 L4.3 8.3 L9.7 2.4" fill="none" stroke="#333" stroke-width="1.3"/></svg></div><div class="combo" style="left:140px;top:121px;width:134px;height:27px;">default<svg width="9" height="6" viewBox="0 0 9 6"><path d="M0.5 0.7 L4.5 4.7 L8.5 0.7" fill="none" stroke="#444" stroke-width="1.2"/></svg></div><div class="cb" style="left:291px;top:128px"></div><div class="combo" style="left:321px;top:121px;width:134px;height:27px;">rel_flux_C3<svg width="9" height="6" viewBox="0 0 9 6"><path d="M0.5 0.7 L4.5 4.7 L8.5 0.7" fill="none" stroke="#444" stroke-width="1.2"/></svg></div><div class="cb" style="left:469px;top:128px"></div><div class="combo" style="left:495px;top:121px;width:98px;height:27px;">none<svg width="9" height="6" viewBox="0 0 9 6"><path d="M0.5 0.7 L4.5 4.7 L8.5 0.7" fill="none" stroke="#444" stroke-width="1.2"/></svg></div><div class="combo" style="left:598px;top:121px;width:134px;height:27px;"><svg width="9" height="6" viewBox="0 0 9 6"><path d="M0.5 0.7 L4.5 4.7 L8.5 0.7" fill="none" stroke="#444" stroke-width="1.2"/></svg></div><div class="combo" style="left:737px;top:121px;width:84px;height:27px;color:#ffafaf;font-weight:bold;font-family:'Liberation Sans',sans-serif;font-size:12px;padding-left:4px">pink<svg width="9" height="6" viewBox="0 0 9 6"><path d="M0.5 0.7 L4.5 4.7 L8.5 0.7" fill="none" stroke="#444" stroke-width="1.2"/></svg></div><div class="combo" style="left:826px;top:121px;width:63px;height:27px;color:#ffafaf;font-weight:bold;font-family:'Liberation Sans',sans-serif;font-size:12px;padding-left:4px">dot<svg width="9" height="6" viewBox="0 0 9 6"><path d="M0.5 0.7 L4.5 4.7 L8.5 0.7" fill="none" stroke="#444" stroke-width="1.2"/></svg></div><div class="cb" style="left:902px;top:128px"></div><div class="spin" style="left:928px;top:121px;width:50px;height:27px;padding-right:19px;">1<i class="u"></i><i class="d"></i></div><div class="cb" style="left:993px;top:128px"></div><div class="spin" style="left:1021px;top:121px;width:50px;height:27px;padding-right:19px;">31<i class="u"></i><i class="d"></i></div><div class="grp" style="left:1076px;top:121px;width:300px;height:28px;border-color:#c6c6c6"></div><div class="combo" style="left:1078px;top:123px;width:49px;height:24px;padding-left:8px;line-height:22px">off<svg style="top:8px" width="9" height="6" viewBox="0 0 9 6"><path d="M0.5 0.7 L4.5 4.7 L8.5 0.7" fill="none" stroke="#444" stroke-width="1.2"/></svg></div><div class="rad on" style="left:1130.5px;top:128.0px"></div><div class="rad" style="left:1152.5px;top:128.0px"></div><div class="rad" style="left:1174.5px;top:128.0px"></div><div class="a" style="left:1193px;top:122px;width:120px;height:26px;background:#f0f0f0;border:1px solid #b2b2b6;box-shadow:inset 0 0 0 2px #fff;color:#a0a0a0;line-height:25px;padding-left:48px">0</div><div class="a" style="left:12px;top:153px;width:30px;height:27px;border:2px solid #ff0000;text-align:center;line-height:23px;font-size:11px">4</div><div class="a" style="left:48px;top:154px;width:24px;height:25px;background:#cbcbcb;border:1px solid #c2c2c2"><div style="position:absolute;left:3px;top:3px"><svg width="16" height="16" viewBox="0 0 16 16"><rect x=".5" y=".5" width="15" height="15" rx="1.5" fill="#a4a4a4" stroke="#9a9a9a"/><path d="M3 1V15M5.5 1V15M10.5 1V15M13 1V15" stroke="#9c9c9c" stroke-width="1"/><path d="M5.5 0H10.5V4.5H15L8 11.5L1 4.5H5.5Z" fill="#969696"/></svg></div></div><div class="cb" style="left:83px;top:160px"></div><div class="cb" style="left:114px;top:160px"><svg width="11" height="11" viewBox="0 0 11 11"><path d="M1.5 5.5 L4.3 8.3 L9.7 2.4" fill="none" stroke="#333" stroke-width="1.3"/></svg></div><div class="combo" style="left:140px;top:153px;width:134px;height:27px;">default<svg width="9" height="6" viewBox="0 0 9 6"><path d="M0.5 0.7 L4.5 4.7 L8.5 0.7" fill="none" stroke="#444" stroke-width="1.2"/></svg></div><div class="cb" style="left:291px;top:160px"></div><div class="combo" style="left:321px;top:153px;width:134px;height:27px;">rel_flux_C4<svg width="9" height="6" viewBox="0 0 9 6"><path d="M0.5 0.7 L4.5 4.7 L8.5 0.7" fill="none" stroke="#444" stroke-width="1.2"/></svg></div><div class="cb" style="left:469px;top:160px"></div><div class="combo" style="left:495px;top:153px;width:98px;height:27px;">none<svg width="9" height="6" viewBox="0 0 9 6"><path d="M0.5 0.7 L4.5 4.7 L8.5 0.7" fill="none" stroke="#444" stroke-width="1.2"/></svg></div><div class="combo" style="left:598px;top:153px;width:134px;height:27px;"><svg width="9" height="6" viewBox="0 0 9 6"><path d="M0.5 0.7 L4.5 4.7 L8.5 0.7" fill="none" stroke="#444" stroke-width="1.2"/></svg></div><div class="combo" style="left:737px;top:153px;width:84px;height:27px;color:#ff0000;font-weight:bold;font-family:'Liberation Sans',sans-serif;font-size:12px;padding-left:4px">red<svg width="9" height="6" viewBox="0 0 9 6"><path d="M0.5 0.7 L4.5 4.7 L8.5 0.7" fill="none" stroke="#444" stroke-width="1.2"/></svg></div><div class="combo" style="left:826px;top:153px;width:63px;height:27px;color:#ff0000;font-weight:bold;font-family:'Liberation Sans',sans-serif;font-size:12px;padding-left:4px">dot<svg width="9" height="6" viewBox="0 0 9 6"><path d="M0.5 0.7 L4.5 4.7 L8.5 0.7" fill="none" stroke="#444" stroke-width="1.2"/></svg></div><div class="cb" style="left:902px;top:160px"></div><div class="spin" style="left:928px;top:153px;width:50px;height:27px;padding-right:19px;">1<i class="u"></i><i class="d"></i></div><div class="cb" style="left:993px;top:160px"></div><div class="spin" style="left:1021px;top:153px;width:50px;height:27px;padding-right:19px;">31<i class="u"></i><i class="d"></i></div><div class="grp" style="left:1076px;top:153px;width:300px;height:28px;border-color:#c6c6c6"></div><div class="combo" style="left:1078px;top:155px;width:49px;height:24px;padding-left:8px;line-height:22px">off<svg style="top:8px" width="9" height="6" viewBox="0 0 9 6"><path d="M0.5 0.7 L4.5 4.7 L8.5 0.7" fill="none" stroke="#444" stroke-width="1.2"/></svg></div><div class="rad on" style="left:1130.5px;top:160.0px"></div><div class="rad" style="left:1152.5px;top:160.0px"></div><div class="rad" style="left:1174.5px;top:160.0px"></div><div class="a" style="left:1193px;top:154px;width:120px;height:26px;background:#f0f0f0;border:1px solid #b2b2b6;box-shadow:inset 0 0 0 2px #fff;color:#a0a0a0;line-height:25px;padding-left:48px">0</div><div class="a" style="left:12px;top:185px;width:30px;height:27px;border:2px solid #ffc800;text-align:center;line-height:23px;font-size:11px">5</div><div class="a" style="left:48px;top:186px;width:24px;height:25px;background:#cbcbcb;border:1px solid #c2c2c2"><div style="position:absolute;left:3px;top:3px"><svg width="16" height="16" viewBox="0 0 16 16"><rect x=".5" y=".5" width="15" height="15" rx="1.5" fill="#a4a4a4" stroke="#9a9a9a"/><path d="M3 1V15M5.5 1V15M10.5 1V15M13 1V15" stroke="#9c9c9c" stroke-width="1"/><path d="M5.5 0H10.5V4.5H15L8 11.5L1 4.5H5.5Z" fill="#969696"/></svg></div></div><div class="cb" style="left:83px;top:192px"></div><div class="cb" style="left:114px;top:192px"><svg width="11" height="11" viewBox="0 0 11 11"><path d="M1.5 5.5 L4.3 8.3 L9.7 2.4" fill="none" stroke="#333" stroke-width="1.3"/></svg></div><div class="combo" style="left:140px;top:185px;width:134px;height:27px;">default<svg width="9" height="6" viewBox="0 0 9 6"><path d="M0.5 0.7 L4.5 4.7 L8.5 0.7" fill="none" stroke="#444" stroke-width="1.2"/></svg></div><div class="cb" style="left:291px;top:192px"></div><div class="combo" style="left:321px;top:185px;width:134px;height:27px;">rel_flux_C5<svg width="9" height="6" viewBox="0 0 9 6"><path d="M0.5 0.7 L4.5 4.7 L8.5 0.7" fill="none" stroke="#444" stroke-width="1.2"/></svg></div><div class="cb" style="left:469px;top:192px"></div><div class="combo" style="left:495px;top:185px;width:98px;height:27px;">none<svg width="9" height="6" viewBox="0 0 9 6"><path d="M0.5 0.7 L4.5 4.7 L8.5 0.7" fill="none" stroke="#444" stroke-width="1.2"/></svg></div><div class="combo" style="left:598px;top:185px;width:134px;height:27px;"><svg width="9" height="6" viewBox="0 0 9 6"><path d="M0.5 0.7 L4.5 4.7 L8.5 0.7" fill="none" stroke="#444" stroke-width="1.2"/></svg></div><div class="combo" style="left:737px;top:185px;width:84px;height:27px;color:#ffc800;font-weight:bold;font-family:'Liberation Sans',sans-serif;font-size:12px;padding-left:4px">orange<svg width="9" height="6" viewBox="0 0 9 6"><path d="M0.5 0.7 L4.5 4.7 L8.5 0.7" fill="none" stroke="#444" stroke-width="1.2"/></svg></div><div class="combo" style="left:826px;top:185px;width:63px;height:27px;color:#ffc800;font-weight:bold;font-family:'Liberation Sans',sans-serif;font-size:12px;padding-left:4px">dot<svg width="9" height="6" viewBox="0 0 9 6"><path d="M0.5 0.7 L4.5 4.7 L8.5 0.7" fill="none" stroke="#444" stroke-width="1.2"/></svg></div><div class="cb" style="left:902px;top:192px"></div><div class="spin" style="left:928px;top:185px;width:50px;height:27px;padding-right:19px;">1<i class="u"></i><i class="d"></i></div><div class="cb" style="left:993px;top:192px"></div><div class="spin" style="left:1021px;top:185px;width:50px;height:27px;padding-right:19px;">31<i class="u"></i><i class="d"></i></div><div class="grp" style="left:1076px;top:185px;width:300px;height:28px;border-color:#c6c6c6"></div><div class="combo" style="left:1078px;top:187px;width:49px;height:24px;padding-left:8px;line-height:22px">off<svg style="top:8px" width="9" height="6" viewBox="0 0 9 6"><path d="M0.5 0.7 L4.5 4.7 L8.5 0.7" fill="none" stroke="#444" stroke-width="1.2"/></svg></div><div class="rad on" style="left:1130.5px;top:192.0px"></div><div class="rad" style="left:1152.5px;top:192.0px"></div><div class="rad" style="left:1174.5px;top:192.0px"></div><div class="a" style="left:1193px;top:186px;width:120px;height:26px;background:#f0f0f0;border:1px solid #b2b2b6;box-shadow:inset 0 0 0 2px #fff;color:#a0a0a0;line-height:25px;padding-left:48px">0</div><div class="a" style="left:12px;top:217px;width:30px;height:27px;border:2px solid #eeee00;text-align:center;line-height:23px;font-size:11px">6</div><div class="a" style="left:48px;top:218px;width:24px;height:25px;background:#cbcbcb;border:1px solid #c2c2c2"><div style="position:absolute;left:3px;top:3px"><svg width="16" height="16" viewBox="0 0 16 16"><rect x=".5" y=".5" width="15" height="15" rx="1.5" fill="#a4a4a4" stroke="#9a9a9a"/><path d="M3 1V15M5.5 1V15M10.5 1V15M13 1V15" stroke="#9c9c9c" stroke-width="1"/><path d="M5.5 0H10.5V4.5H15L8 11.5L1 4.5H5.5Z" fill="#969696"/></svg></div></div><div class="cb" style="left:83px;top:224px"></div><div class="cb" style="left:114px;top:224px"><svg width="11" height="11" viewBox="0 0 11 11"><path d="M1.5 5.5 L4.3 8.3 L9.7 2.4" fill="none" stroke="#333" stroke-width="1.3"/></svg></div><div class="combo" style="left:140px;top:217px;width:134px;height:27px;">default<svg width="9" height="6" viewBox="0 0 9 6"><path d="M0.5 0.7 L4.5 4.7 L8.5 0.7" fill="none" stroke="#444" stroke-width="1.2"/></svg></div><div class="cb" style="left:291px;top:224px"></div><div class="combo" style="left:321px;top:217px;width:134px;height:27px;"><svg width="9" height="6" viewBox="0 0 9 6"><path d="M0.5 0.7 L4.5 4.7 L8.5 0.7" fill="none" stroke="#444" stroke-width="1.2"/></svg></div><div class="cb" style="left:469px;top:224px"></div><div class="combo" style="left:495px;top:217px;width:98px;height:27px;">none<svg width="9" height="6" viewBox="0 0 9 6"><path d="M0.5 0.7 L4.5 4.7 L8.5 0.7" fill="none" stroke="#444" stroke-width="1.2"/></svg></div><div class="combo" style="left:598px;top:217px;width:134px;height:27px;"><svg width="9" height="6" viewBox="0 0 9 6"><path d="M0.5 0.7 L4.5 4.7 L8.5 0.7" fill="none" stroke="#444" stroke-width="1.2"/></svg></div><div class="combo" style="left:737px;top:217px;width:84px;height:27px;color:#eeee00;font-weight:bold;font-family:'Liberation Sans',sans-serif;font-size:12px;padding-left:4px">yellow<svg width="9" height="6" viewBox="0 0 9 6"><path d="M0.5 0.7 L4.5 4.7 L8.5 0.7" fill="none" stroke="#444" stroke-width="1.2"/></svg></div><div class="combo" style="left:826px;top:217px;width:63px;height:27px;color:#eeee00;font-weight:bold;font-family:'Liberation Sans',sans-serif;font-size:12px;padding-left:4px">dot<svg width="9" height="6" viewBox="0 0 9 6"><path d="M0.5 0.7 L4.5 4.7 L8.5 0.7" fill="none" stroke="#444" stroke-width="1.2"/></svg></div><div class="cb" style="left:902px;top:224px"></div><div class="spin" style="left:928px;top:217px;width:50px;height:27px;padding-right:19px;">1<i class="u"></i><i class="d"></i></div><div class="cb" style="left:993px;top:224px"></div><div class="spin" style="left:1021px;top:217px;width:50px;height:27px;padding-right:19px;">31<i class="u"></i><i class="d"></i></div><div class="grp" style="left:1076px;top:217px;width:300px;height:28px;border-color:#c6c6c6"></div><div class="combo" style="left:1078px;top:219px;width:49px;height:24px;padding-left:8px;line-height:22px">off<svg style="top:8px" width="9" height="6" viewBox="0 0 9 6"><path d="M0.5 0.7 L4.5 4.7 L8.5 0.7" fill="none" stroke="#444" stroke-width="1.2"/></svg></div><div class="rad on" style="left:1130.5px;top:224.0px"></div><div class="rad" style="left:1152.5px;top:224.0px"></div><div class="rad" style="left:1174.5px;top:224.0px"></div><div class="a" style="left:1193px;top:218px;width:120px;height:26px;background:#f0f0f0;border:1px solid #b2b2b6;box-shadow:inset 0 0 0 2px #fff;color:#a0a0a0;line-height:25px;padding-left:48px">0</div><div class="a" style="left:12px;top:249px;width:30px;height:27px;border:2px solid #a5805a;text-align:center;line-height:23px;font-size:11px">7</div><div class="a" style="left:48px;top:250px;width:24px;height:25px;background:#cbcbcb;border:1px solid #c2c2c2"><div style="position:absolute;left:3px;top:3px"><svg width="16" height="16" viewBox="0 0 16 16"><rect x=".5" y=".5" width="15" height="15" rx="1.5" fill="#a4a4a4" stroke="#9a9a9a"/><path d="M3 1V15M5.5 1V15M10.5 1V15M13 1V15" stroke="#9c9c9c" stroke-width="1"/><path d="M5.5 0H10.5V4.5H15L8 11.5L1 4.5H5.5Z" fill="#969696"/></svg></div></div><div class="cb" style="left:83px;top:256px"></div><div class="cb" style="left:114px;top:256px"><svg width="11" height="11" viewBox="0 0 11 11"><path d="M1.5 5.5 L4.3 8.3 L9.7 2.4" fill="none" stroke="#333" stroke-width="1.3"/></svg></div><div class="combo" style="left:140px;top:249px;width:134px;height:27px;">default<svg width="9" height="6" viewBox="0 0 9 6"><path d="M0.5 0.7 L4.5 4.7 L8.5 0.7" fill="none" stroke="#444" stroke-width="1.2"/></svg></div><div class="cb" style="left:291px;top:256px"></div><div class="combo" style="left:321px;top:249px;width:134px;height:27px;"><svg width="9" height="6" viewBox="0 0 9 6"><path d="M0.5 0.7 L4.5 4.7 L8.5 0.7" fill="none" stroke="#444" stroke-width="1.2"/></svg></div><div class="cb" style="left:469px;top:256px"></div><div class="combo" style="left:495px;top:249px;width:98px;height:27px;">none<svg width="9" height="6" viewBox="0 0 9 6"><path d="M0.5 0.7 L4.5 4.7 L8.5 0.7" fill="none" stroke="#444" stroke-width="1.2"/></svg></div><div class="combo" style="left:598px;top:249px;width:134px;height:27px;"><svg width="9" height="6" viewBox="0 0 9 6"><path d="M0.5 0.7 L4.5 4.7 L8.5 0.7" fill="none" stroke="#444" stroke-width="1.2"/></svg></div><div class="combo" style="left:737px;top:249px;width:84px;height:27px;color:#a5805a;font-weight:bold;font-family:'Liberation Sans',sans-serif;font-size:12px;padding-left:4px">brown<svg width="9" height="6" viewBox="0 0 9 6"><path d="M0.5 0.7 L4.5 4.7 L8.5 0.7" fill="none" stroke="#444" stroke-width="1.2"/></svg></div><div class="combo" style="left:826px;top:249px;width:63px;height:27px;color:#a5805a;font-weight:bold;font-family:'Liberation Sans',sans-serif;font-size:12px;padding-left:4px">dot<svg width="9" height="6" viewBox="0 0 9 6"><path d="M0.5 0.7 L4.5 4.7 L8.5 0.7" fill="none" stroke="#444" stroke-width="1.2"/></svg></div><div class="cb" style="left:902px;top:256px"></div><div class="spin" style="left:928px;top:249px;width:50px;height:27px;padding-right:19px;">1<i class="u"></i><i class="d"></i></div><div class="cb" style="left:993px;top:256px"></div><div class="spin" style="left:1021px;top:249px;width:50px;height:27px;padding-right:19px;">31<i class="u"></i><i class="d"></i></div><div class="grp" style="left:1076px;top:249px;width:300px;height:28px;border-color:#c6c6c6"></div><div class="combo" style="left:1078px;top:251px;width:49px;height:24px;padding-left:8px;line-height:22px">off<svg style="top:8px" width="9" height="6" viewBox="0 0 9 6"><path d="M0.5 0.7 L4.5 4.7 L8.5 0.7" fill="none" stroke="#444" stroke-width="1.2"/></svg></div><div class="rad on" style="left:1130.5px;top:256.0px"></div><div class="rad" style="left:1152.5px;top:256.0px"></div><div class="rad" style="left:1174.5px;top:256.0px"></div><div class="a" style="left:1193px;top:250px;width:120px;height:26px;background:#f0f0f0;border:1px solid #b2b2b6;box-shadow:inset 0 0 0 2px #fff;color:#a0a0a0;line-height:25px;padding-left:48px">0</div><div class="a" style="left:12px;top:281px;width:30px;height:27px;border:2px solid #8000ff;text-align:center;line-height:23px;font-size:11px">8</div><div class="a" style="left:48px;top:282px;width:24px;height:25px;background:#cbcbcb;border:1px solid #c2c2c2"><div style="position:absolute;left:3px;top:3px"><svg width="16" height="16" viewBox="0 0 16 16"><rect x=".5" y=".5" width="15" height="15" rx="1.5" fill="#a4a4a4" stroke="#9a9a9a"/><path d="M3 1V15M5.5 1V15M10.5 1V15M13 1V15" stroke="#9c9c9c" stroke-width="1"/><path d="M5.5 0H10.5V4.5H15L8 11.5L1 4.5H5.5Z" fill="#969696"/></svg></div></div><div class="cb" style="left:83px;top:288px"></div><div class="cb" style="left:114px;top:288px"><svg width="11" height="11" viewBox="0 0 11 11"><path d="M1.5 5.5 L4.3 8.3 L9.7 2.4" fill="none" stroke="#333" stroke-width="1.3"/></svg></div><div class="combo" style="left:140px;top:281px;width:134px;height:27px;">default<svg width="9" height="6" viewBox="0 0 9 6"><path d="M0.5 0.7 L4.5 4.7 L8.5 0.7" fill="none" stroke="#444" stroke-width="1.2"/></svg></div><div class="cb" style="left:291px;top:288px"></div><div class="combo" style="left:321px;top:281px;width:134px;height:27px;"><svg width="9" height="6" viewBox="0 0 9 6"><path d="M0.5 0.7 L4.5 4.7 L8.5 0.7" fill="none" stroke="#444" stroke-width="1.2"/></svg></div><div class="cb" style="left:469px;top:288px"></div><div class="combo" style="left:495px;top:281px;width:98px;height:27px;">none<svg width="9" height="6" viewBox="0 0 9 6"><path d="M0.5 0.7 L4.5 4.7 L8.5 0.7" fill="none" stroke="#444" stroke-width="1.2"/></svg></div><div class="combo" style="left:598px;top:281px;width:134px;height:27px;"><svg width="9" height="6" viewBox="0 0 9 6"><path d="M0.5 0.7 L4.5 4.7 L8.5 0.7" fill="none" stroke="#444" stroke-width="1.2"/></svg></div><div class="combo" style="left:737px;top:281px;width:84px;height:27px;color:#8000ff;font-weight:bold;font-family:'Liberation Sans',sans-serif;font-size:12px;padding-left:4px">purple<svg width="9" height="6" viewBox="0 0 9 6"><path d="M0.5 0.7 L4.5 4.7 L8.5 0.7" fill="none" stroke="#444" stroke-width="1.2"/></svg></div><div class="combo" style="left:826px;top:281px;width:63px;height:27px;color:#8000ff;font-weight:bold;font-family:'Liberation Sans',sans-serif;font-size:12px;padding-left:4px">dot<svg width="9" height="6" viewBox="0 0 9 6"><path d="M0.5 0.7 L4.5 4.7 L8.5 0.7" fill="none" stroke="#444" stroke-width="1.2"/></svg></div><div class="cb" style="left:902px;top:288px"></div><div class="spin" style="left:928px;top:281px;width:50px;height:27px;padding-right:19px;">1<i class="u"></i><i class="d"></i></div><div class="cb" style="left:993px;top:288px"></div><div class="spin" style="left:1021px;top:281px;width:50px;height:27px;padding-right:19px;">31<i class="u"></i><i class="d"></i></div><div class="grp" style="left:1076px;top:281px;width:300px;height:28px;border-color:#c6c6c6"></div><div class="combo" style="left:1078px;top:283px;width:49px;height:24px;padding-left:8px;line-height:22px">off<svg style="top:8px" width="9" height="6" viewBox="0 0 9 6"><path d="M0.5 0.7 L4.5 4.7 L8.5 0.7" fill="none" stroke="#444" stroke-width="1.2"/></svg></div><div class="rad on" style="left:1130.5px;top:288.0px"></div><div class="rad" style="left:1152.5px;top:288.0px"></div><div class="rad" style="left:1174.5px;top:288.0px"></div><div class="a" style="left:1193px;top:282px;width:120px;height:26px;background:#f0f0f0;border:1px solid #b2b2b6;box-shadow:inset 0 0 0 2px #fff;color:#a0a0a0;line-height:25px;padding-left:48px">0</div></div><div class="a" style="left:1246px;top:31px;width:18px;height:303px;background:#f0f0f0"></div><div class="a" style="left:1247px;top:48px;width:15px;height:254px;background:#cdcdcd"></div><svg class="a" style="left:1250px;top:36px" width="9" height="7"><path d="M0.8 6L4.5 1.6L8.2 6" fill="none" stroke="#404040" stroke-width="1.8"/></svg><svg class="a" style="left:1250px;top:322px" width="9" height="7"><path d="M0.8 1L4.5 5.4L8.2 1" fill="none" stroke="#404040" stroke-width="1.8"/></svg><div class="a" style="left:0px;top:334px;width:1264px;height:17px;background:#f0f0f0"></div><div class="a" style="left:18px;top:335px;width:725px;height:15px;background:#cdcdcd"></div><svg class="a" style="left:6px;top:338px" width="7" height="9"><path d="M6 0.8L1.6 4.5L6 8.2" fill="none" stroke="#404040" stroke-width="1.8"/></svg><svg class="a" style="left:1233px;top:338px" width="7" height="9"><path d="M1 0.8L5.4 4.5L1 8.2" fill="none" stroke="#404040" stroke-width="1.8"/></svg></div>
<div class="win seg" style="left:352px;top:655px;width:685px;height:292px;background:#fff"><div class="a" style="left:8px;top:8px"><svg width="20" height="16" viewBox="0 0 20 16"><g transform="rotate(25 10 8)"><ellipse cx="10" cy="8" rx="9" ry="3.6" fill="none" stroke="#8c8c8c" stroke-width="2"/><ellipse cx="10" cy="8" rx="5" ry="4.2" fill="#c9a37c"/><path d="M1.2 8.6A9 3.6 0 0 0 18.8 8.6" fill="none" stroke="#777" stroke-width="2"/></g></svg></div><div class="a seg" style="left:30px;top:9px;font-size:12px;line-height:15px;color:#000">Measurements</div><svg class="a" style="left:566px;top:10px" width="11" height="11"><path d="M0 5.5H10" stroke="#111" stroke-width="1"/></svg><svg class="a" style="left:611px;top:10px" width="11" height="11"><rect x="0.5" y="0.5" width="9" height="9" fill="none" stroke="#111" stroke-width="1"/></svg><svg class="a" style="left:657px;top:10px" width="11" height="11"><path d="M0 0L10 10M10 0L0 10" stroke="#111" stroke-width="1"/></svg><div class="a" style="left:0;top:31px;width:685px;height:20px;background:#f0f0f0;font-size:15px;line-height:19px"><span class="a" style="left:8px">File</span><span class="a" style="left:45px">Edit</span><span class="a" style="left:84px">Font</span><span class="a" style="left:127px">Options</span></div><div class="a" style="left:0;top:51px;width:669px;height:21px;background:#c0c0c0;border-top:1px solid #555;border-bottom:1px solid #555;overflow:hidden;font-size:14px;line-height:21px;white-space:nowrap"><span class="a" style="left:3px">Label</span><div class="a" style="left:297px;top:0;width:1px;height:20px;background:#555"></div><div class="a" style="left:298px;top:0;width:1px;height:20px;background:#e8e8e8"></div><span class="a" style="left:300px">slice</span><div class="a" style="left:340px;top:0;width:1px;height:20px;background:#555"></div><div class="a" style="left:341px;top:0;width:1px;height:20px;background:#e8e8e8"></div><span class="a" style="left:343px">Saturated</span><div class="a" style="left:417px;top:0;width:1px;height:20px;background:#555"></div><div class="a" style="left:418px;top:0;width:1px;height:20px;background:#e8e8e8"></div><span class="a" style="left:420px">J.D.-2400000</span><div class="a" style="left:524px;top:0;width:1px;height:20px;background:#555"></div><div class="a" style="left:525px;top:0;width:1px;height:20px;background:#e8e8e8"></div><span class="a" style="left:527px">JD_UTC</span><div class="a" style="left:647px;top:0;width:1px;height:20px;background:#555"></div><div class="a" style="left:648px;top:0;width:1px;height:20px;background:#e8e8e8"></div><span class="a" style="left:650px">JD_</span></div><div class="a" style="left:0;top:74px;width:669px;height:22px;overflow:hidden;font-size:14px;line-height:20px;white-space:nowrap"><span class="a" style="left:3px">ESPC WASP-1245.000secs00000336_out.fit</span><span class="a" style="left:300px">336</span><span class="a" style="left:343px">0</span><span class="a" style="left:420px">57393.689299</span><span class="a" style="left:527px">2457393.689299</span><span class="a" style="left:650px">2457393</span></div><div class="a" style="left:669px;top:51px;width:16px;height:224px;background:#f0f0f0"></div><div class="a" style="left:669px;top:68px;width:16px;height:190px;background:#cdcdcd"></div><svg class="a" style="left:672px;top:56px" width="9" height="7"><path d="M0.8 6L4.5 1.6L8.2 6" fill="none" stroke="#404040" stroke-width="1.8"/></svg><svg class="a" style="left:672px;top:263px" width="9" height="7"><path d="M0.8 1L4.5 5.4L8.2 1" fill="none" stroke="#404040" stroke-width="1.8"/></svg><div class="a" style="left:0;top:275px;width:685px;height:17px;background:#f0f0f0"></div><div class="a" style="left:17px;top:275px;width:35px;height:17px;background:#cdcdcd"></div><svg class="a" style="left:5px;top:279px" width="7" height="9"><path d="M6 0.8L1.6 4.5L6 8.2" fill="none" stroke="#404040" stroke-width="1.8"/></svg><svg class="a" style="left:673px;top:279px" width="7" height="9"><path d="M1 0.8L5.4 4.5L1 8.2" fill="none" stroke="#404040" stroke-width="1.8"/></svg></div>
<div class="a seg" style="left:0;top:984px;width:1280px;height:40px;background:linear-gradient(90deg,#3c3c3c 0,#3c3c3c 823px,#212123 823px,#212123 1154px,#1b1c20 1154px)"><div class="a" style="left:736px;top:0;width:44px;height:40px;background:#5a5a5a"></div><div class="a" style="left:152px;top:38px;width:40px;height:2px;background:#76b9ed"></div><div class="a" style="left:348px;top:38px;width:40px;height:2px;background:#76b9ed"></div><div class="a" style="left:446px;top:38px;width:40px;height:2px;background:#76b9ed"></div><div class="a" style="left:691px;top:38px;width:40px;height:2px;background:#76b9ed"></div><div class="a" style="left:736px;top:38px;width:44px;height:2px;background:#9ccaf0"></div><svg class="a" style="left:16px;top:12px" width="17" height="17" viewBox="0 0 17 17"><path d="M0 2.4L7 1.4V8H0ZM8 1.3L17 0V8H8ZM0 9H7V15.6L0 14.6ZM8 9H17V17L8 15.7Z" fill="#fff"/></svg><svg class="a" style="left:63px;top:11px" width="18" height="18" viewBox="0 0 18 18"><circle cx="11" cy="7" r="5.2" fill="none" stroke="#fff" stroke-width="1.6"/><path d="M7.2 10.8L1 17" stroke="#fff" stroke-width="1.8"/></svg><svg class="a" style="left:110px;top:8px" width="25" height="25" viewBox="0 0 25 25"><circle cx="12.5" cy="12.5" r="11.5" fill="#e01010" stroke="#8a0000"/><ellipse cx="12.5" cy="7" rx="8" ry="4.5" fill="#ff6a5a" opacity=".55"/><path d="M7.5 7.5L17.5 17.5M17.5 7.5L7.5 17.5" stroke="#fff" stroke-width="3.2" stroke-linecap="round"/></svg><svg class="a" style="left:159px;top:7px" width="26" height="26" viewBox="0 0 26 26"><circle cx="13" cy="13" r="12" fill="#1b7fd6"/><path d="M2 15C2 6 10 1 16 2C22 3 25 8 25 12C25 16 21 17 17 17C17 13 14 10 10 10C6 10 2 12 2 15Z" fill="#35c6a0"/><path d="M1.5 15C3 9 9 8 13 10C10 11 9 14 10 17C11.5 21 16 23 21 21C18 25 11 26 6 23C2.5 21 1 18 1.5 15Z" fill="#0d57b0"/><path d="M10 10C14 10 17 13 17 17C13 17 11 15 10 12Z" fill="#3b3b3b"/></svg><svg class="a" style="left:209px;top:8px" width="24" height="24" viewBox="0 0 24 24"><rect width="24" height="24" fill="#000"/><path d="M12 1V23M12 12H1.5C3 6 6 3 8 3.5C10 4 11 8 12 12ZM12 12H22.5C21 18 18 21 16 20.5C14 20 13 16 12 12Z" fill="none" stroke="#f2f2f2" stroke-width="1.05"/><circle cx="12" cy="12" r="2.7" fill="#1a86dc"/><text x="15.3" y="9.3" font-family="Liberation Sans,sans-serif" font-size="8.5" fill="#1e9cf0">4</text></svg><svg class="a" style="left:258px;top:8px" width="24" height="24" viewBox="0 0 24 24"><rect width="24" height="24" fill="#000"/><path d="M12 1V23M12 12H1.5C3 6 6 3 8 3.5C10 4 11 8 12 12ZM12 12H22.5C21 18 18 21 16 20.5C14 20 13 16 12 12Z" fill="none" stroke="#f2f2f2" stroke-width="1.05"/><circle cx="12" cy="12" r="2.7" fill="#1a86dc"/><text x="15.3" y="9.3" font-family="Liberation Sans,sans-serif" font-size="8.5" fill="#20c8f0">3</text></svg><svg class="a" style="left:307px;top:11px" width="26" height="20" viewBox="0 0 26 20"><path d="M1 1H8L13 7L19 1H25L16 10L25 18H18L13 13L8 18H1L10 10Z" fill="#0a0a0a"/><path d="M6 18H12M16 18H23" stroke="#7a8fe0" stroke-width="1.5"/></svg><svg class="a" style="left:354px;top:6px" width="28" height="28" viewBox="0 0 28 28"><circle cx="14" cy="15" r="12" fill="#2ea3e6"/><path d="M20 1C26 6 27 14 24 20" fill="none" stroke="#2ea3e6" stroke-width="4"/><circle cx="14" cy="15" r="7" fill="#fff"/><circle cx="14" cy="15" r="4.6" fill="#2ea3e6"/><circle cx="13" cy="14" r="2" fill="#d8f0ff"/></svg><svg class="a" style="left:405px;top:8px" width="24" height="24" viewBox="0 0 24 24"><rect width="24" height="24" fill="#0a1a5a" stroke="#2a3a7a"/><path d="M5 19L11 4L19 12L7 12M11 4L15 20" fill="none" stroke="#f2e640" stroke-width="1.1"/><g fill="#fff"><circle cx="5" cy="19" r="1.4"/><circle cx="11" cy="4" r="1.4"/><circle cx="19" cy="12" r="1.4"/><circle cx="7" cy="12" r="1.4"/><circle cx="15" cy="20" r="1.4"/></g></svg><svg class="a" style="left:453px;top:10px" width="26" height="22" viewBox="0 0 26 22"><path d="M2 5H7L9 2H17L19 5H24Q25 5 25 6V19Q25 20 24 20H2Q1 20 1 19V6Q1 5 2 5Z" fill="#8c9aa6"/><circle cx="13" cy="12" r="6.2" fill="#d8dde2"/><circle cx="13" cy="12" r="4.8" fill="#8a7cf0"/><circle cx="12" cy="11" r="2.6" fill="#c09af8"/><rect x="20" y="7" width="2" height="2" fill="#e8e8e8"/></svg><svg class="a" style="left:503px;top:8px" width="25" height="25" viewBox="0 0 25 25"><circle cx="12.5" cy="12.5" r="12" fill="#1da82a"/><circle cx="12.5" cy="12.5" r="12" fill="none" stroke="#0a6a14"/><path d="M12.5 0V25M0 12.5H25" stroke="#0a5a10" stroke-width="1.5"/><circle cx="12.5" cy="12.5" r="5" fill="#111"/><text x="8.5" y="15" font-family="Liberation Sans,sans-serif" font-size="6" font-weight="bold" fill="#fff">PHD</text></svg><svg class="a" style="left:552px;top:8px" width="24" height="24" viewBox="0 0 24 24"><rect width="24" height="24" fill="#fff"/><path d="M6 3V21M18 3L7 14M10 11L19 21" fill="none" stroke="#444" stroke-width="1.3"/><path d="M4 3L6 10L4 21" fill="none" stroke="#999" stroke-width=".8"/><circle cx="6" cy="11" r="1.2" fill="#39c"/></svg><svg class="a" style="left:600px;top:8px" width="26" height="25" viewBox="0 0 26 25"><path d="M8 3L23 2L20 23L2 21Z" fill="#bfe0f0" stroke="#7aa"/><path d="M8 3L23 2L22.6 5L7.2 6Z" fill="#7ab6d8"/><path d="M20 23L23 2L25 5L23 22Z" fill="#c8a060"/><path d="M6 10L20 9M5 14L19 13M4 18L18 17" stroke="#e8f4fa" stroke-width="1.4"/></svg><svg class="a" style="left:652px;top:8px" width="20" height="25" viewBox="0 0 20 25"><rect width="20" height="25" rx="1.5" fill="#7a8e9e"/><rect x="2" y="2" width="16" height="5" fill="#3ec0f0"/><g fill="#e8eef2"><rect x="2" y="9" width="4" height="4"/><rect x="8" y="9" width="4" height="4"/><rect x="2" y="14" width="4" height="4"/><rect x="8" y="14" width="4" height="4"/><rect x="2" y="19" width="4" height="4"/><rect x="8" y="19" width="4" height="4"/></g><rect x="14" y="9" width="4" height="4" fill="#e8eef2"/><rect x="14" y="14" width="4" height="9" fill="#1c58a8"/></svg><svg class="a" style="left:697px;top:7px" width="28" height="27" viewBox="0 0 28 27"><rect x="9" y="9" width="17" height="16" rx="7" fill="#111" stroke="#ddd" stroke-width="2.4"/><path d="M15 13V21M20 13V21" stroke="#eee" stroke-width="2.4"/><circle cx="7" cy="7" r="6.4" fill="#1020c8"/><circle cx="7" cy="7" r="4.2" fill="#fff"/><path d="M7 4V7H9.5" stroke="#d00" stroke-width="1.2" fill="none"/></svg><svg class="a" style="left:747px;top:11px" width="26" height="19" viewBox="0 0 30 22"><g transform="rotate(28 15 11)"><ellipse cx="15" cy="11" rx="13" ry="4.2" fill="none" stroke="#8a8a8a" stroke-width="2.4"/><ellipse cx="15" cy="11" rx="7" ry="6" fill="#c9a98a"/><path d="M2.2 11.8A13 4.2 0 0 0 27.8 11.8" fill="none" stroke="#9a9a9a" stroke-width="2.4"/></g></svg><svg class="a" style="left:960px;top:9px" width="20" height="20" viewBox="0 0 20 20"><path d="M9 1C13 4 14 10 10 14C7 17 3 17 1 16C4 20 12 20 16 15C20 10 17 2 9 1Z" fill="#f6c818"/></svg><div class="a" style="left:990px;top:12px;color:#fff;font-size:14.5px;line-height:17px;letter-spacing:-.3px">20°C</div><svg class="a" style="left:1037px;top:15px" width="13" height="8"><path d="M1 7L6.5 1.5L12 7" fill="none" stroke="#fff" stroke-width="1.4"/></svg><svg class="a" style="left:1058px;top:12px" width="20" height="16" viewBox="0 0 20 16"><path d="M4 11Q0 11 1 7.5Q2 5 5 6Q6 2 10 3Q13 4 13 7Q16 7 15.5 10Q15 11 13 11Z" fill="#b8b8b8"/><circle cx="12.5" cy="11.5" r="4" fill="#e02020"/><path d="M10.8 9.8L14.2 13.2M14.2 9.8L10.8 13.2" stroke="#fff" stroke-width="1.2"/></svg><svg class="a" style="left:1083px;top:12px" width="17" height="16" viewBox="0 0 17 16"><rect x="4.7" y="1.7" width="11.6" height="8.6" fill="none" stroke="#fff" stroke-width="1.3"/><path d="M10.5 10.5V14M6.5 14.3H14.5" stroke="#fff" stroke-width="1.3"/><rect x=".7" y=".7" width="4" height="5" fill="#2a2a2b" stroke="#fff" stroke-width="1.1"/></svg><svg class="a" style="left:1107px;top:12px" width="18" height="16" viewBox="0 0 18 16"><path d="M1 5.5H3.5L7.5 2V14L3.5 10.5H1Z" fill="none" stroke="#fff" stroke-width="1.2"/><path d="M10 5.5Q11.5 8 10 10.5M12.3 3.8Q15 8 12.3 12.2M14.6 2Q18.5 8 14.6 14" fill="none" stroke="#fff" stroke-width="1.1"/></svg><div class="a" style="left:1125px;top:3px;width:40px;text-align:center;color:#fff;font-size:11.5px;line-height:17px">ENG<br>US</div><div class="a" style="left:1160px;top:3px;width:70px;text-align:center;color:#fff;font-size:11.8px;line-height:17px;letter-spacing:-.2px;white-space:nowrap">10:36 PM<br>4/28/2022</div><svg class="a" style="left:1238px;top:9px" width="24" height="24" viewBox="0 0 24 24"><path d="M1 2H16V14H8L4 18V14H1Z" fill="#fff"/><path d="M4 5.5H13M4 8H13M4 10.5H10" stroke="#2a2a2b" stroke-width="1"/><circle cx="16" cy="15" r="7" fill="#222" stroke="#999" stroke-width="1.2"/><text x="13.6" y="19" font-family="Liberation Sans,sans-serif" font-size="11" fill="#fff">1</text></svg></div>
</body></html>
